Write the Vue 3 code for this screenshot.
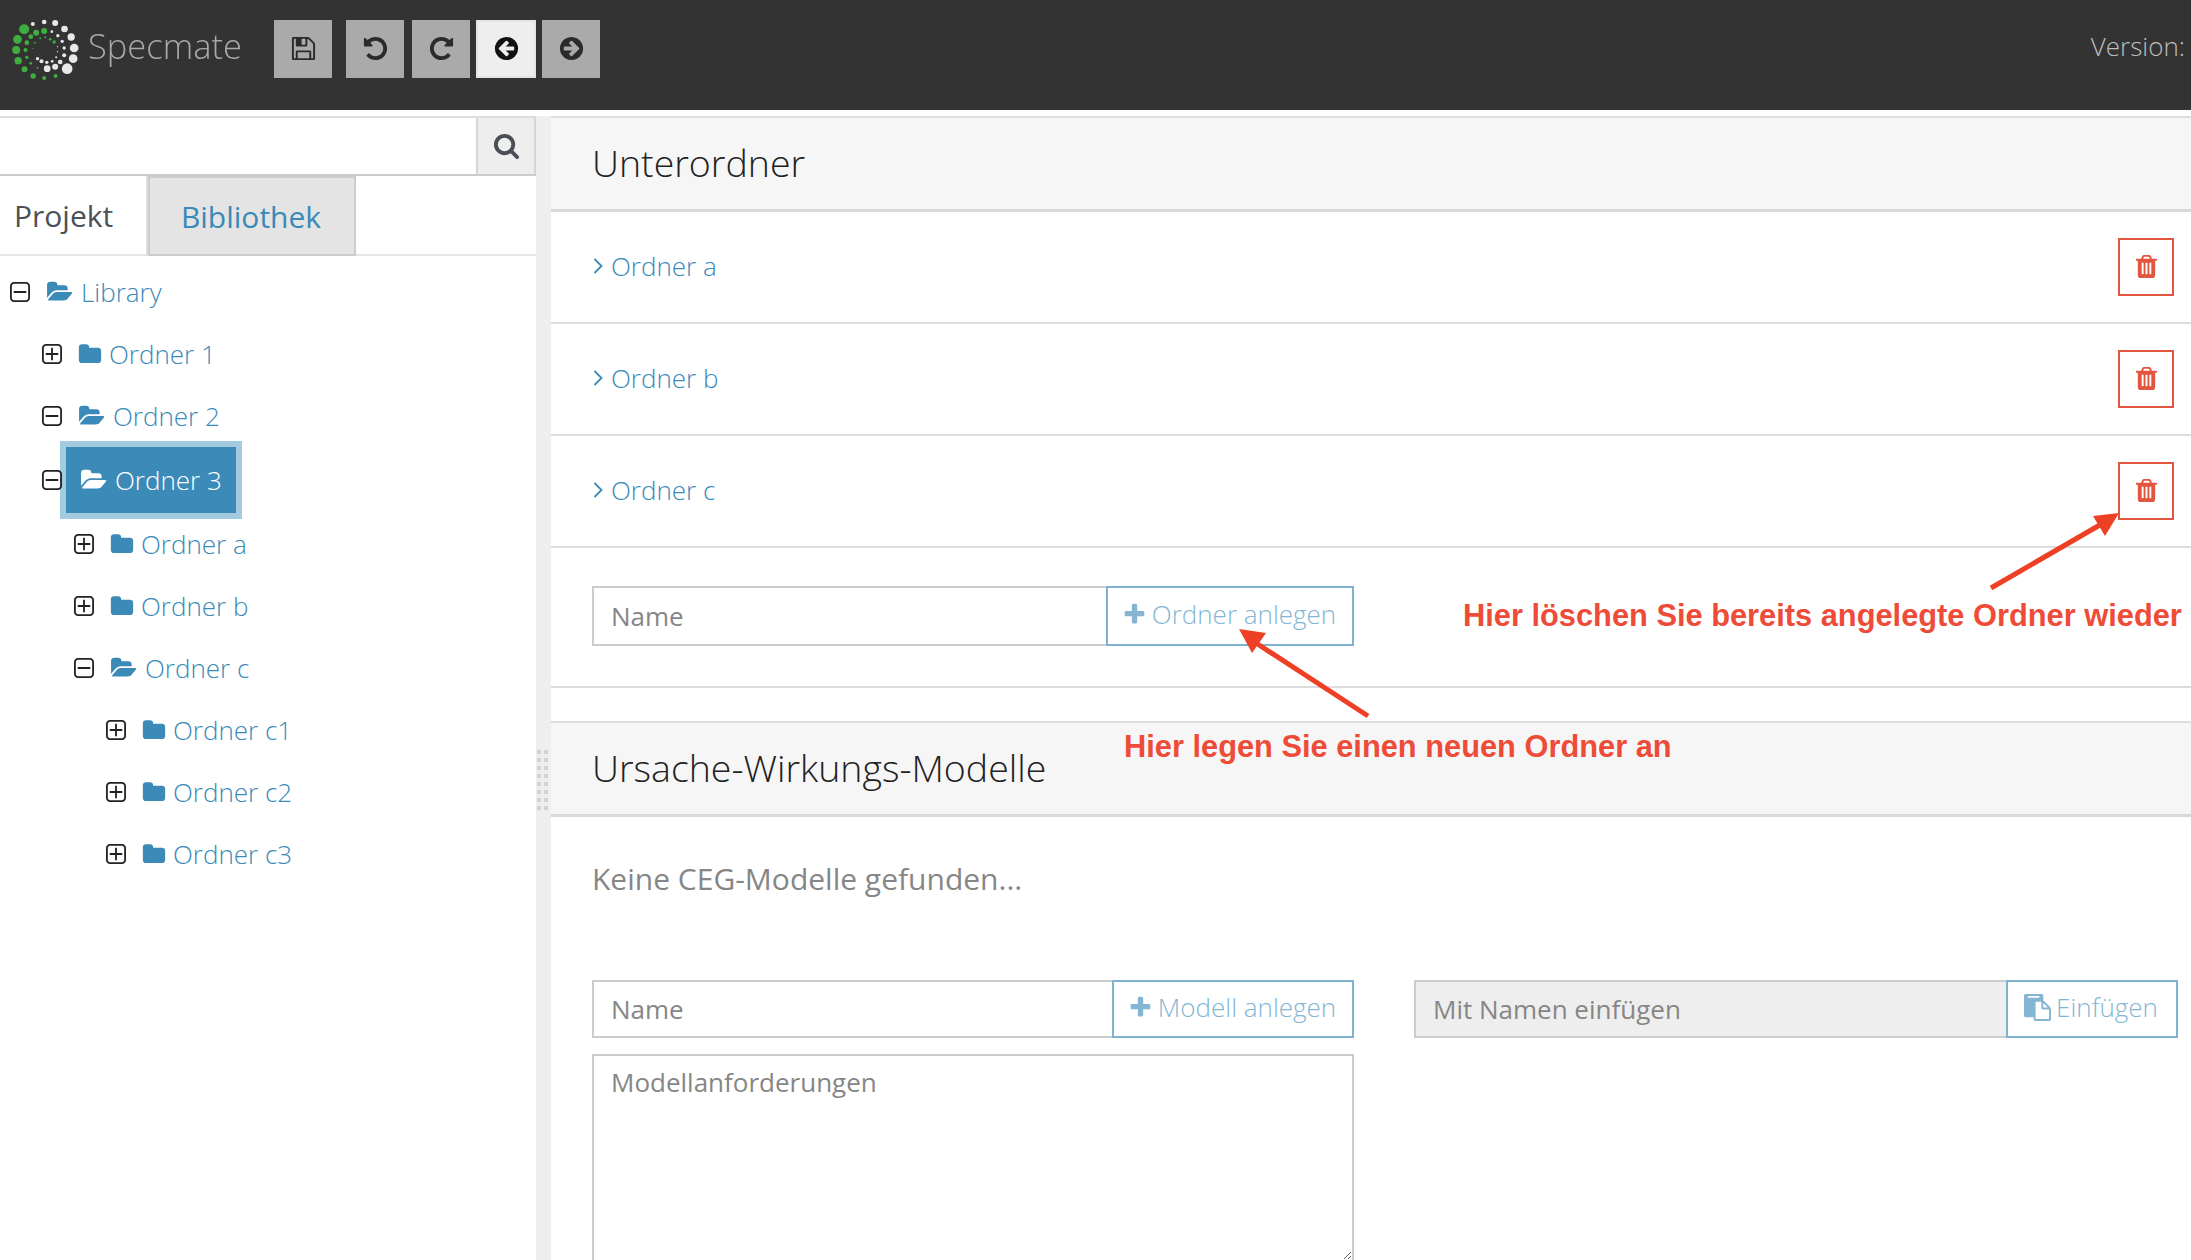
<script setup>
const d = {
  search: 'M1216 832q0-185-131.5-316.5t-316.5-131.5-316.5 131.5-131.5 316.5 131.5 316.5 316.5 131.5 316.5-131.5 131.5-316.5zm512 832q0 52-38 90t-90 38q-54 0-90-38l-343-342q-179 124-399 124-143 0-273.5-55.5t-225-150-150-225-55.5-273.5 55.5-273.5 150-225 225-150 273.5-55.5 273.5 55.5 225 150 150 225 55.5 273.5q0 220-124 399l343 343q37 37 37 90z',
  folder: 'M1728 608v704q0 92-66 158t-158 66h-1216q-92 0-158-66t-66-158v-960q0-92 66-158t158-66h320q92 0 158 66t66 158v32h672q92 0 158 66t66 158z',
  open: 'M1943 952q0 31-31 66l-336 396q-43 51-120.5 86.5t-143.5 35.5h-1088q-34 0-60.5-13t-26.5-43q0-31 31-66l336-396q43-51 120.5-86.5t143.5-35.5h1088q34 0 60.5 13t26.5 43zm-343-344v160h-832q-94 0-197 47.5t-164 119.5l-337 396-5 6q0-4-.5-12.5t-.5-12.5v-960q0-92 66-158t158-66h320q92 0 158 66t66 158v32h544q92 0 158 66t66 158z',
  trash: 'M704 1376v-704q0-14-9-23t-23-9h-64q-14 0-23 9t-9 23v704q0 14 9 23t23 9h64q14 0 23-9t9-23zm256 0v-704q0-14-9-23t-23-9h-64q-14 0-23 9t-9 23v704q0 14 9 23t23 9h64q14 0 23-9t9-23zm256 0v-704q0-14-9-23t-23-9h-64q-14 0-23 9t-9 23v704q0 14 9 23t23 9h64q14 0 23-9t9-23zm-544-992h448l-48-117q-7-9-17-11h-317q-10 2-17 11zm928 32v64q0 14-9 23t-23 9h-96v948q0 83-47 143.5t-113 60.5h-832q-66 0-113-58.5t-47-141.5v-952h-96q-14 0-23-9t-9-23v-64q0-14 9-23t23-9h309l70-167q15-37 54-63t79-26h320q40 0 79 26t54 63l70 167h309q14 0 23 9t9 23z',
  plus: 'M1600 736v192q0 40-28 68t-68 28h-416v416q0 40-28 68t-68 28h-192q-40 0-68-28t-28-68v-416h-416q-40 0-68-28t-28-68v-192q0-40 28-68t68-28h416v-416q0-40 28-68t68-28h192q40 0 68 28t28 68v416h416q40 0 68 28t28 68z',
  paste: 'M768 1664h896v-640h-416q-40 0-68-28t-28-68v-416h-384v1152zm256-1440v-64q0-13-9.5-22.5t-22.5-9.5h-704q-13 0-22.5 9.5t-9.5 22.5v64q0 13 9.5 22.5t22.5 9.5h704q13 0 22.5-9.5t9.5-22.5zm256 672h299l-299-299v299zm512 128v672q0 40-28 68t-68 28h-960q-40 0-68-28t-28-68v-160h-544q-40 0-68-28t-28-68v-1344q0-40 28-68t68-28h1088q40 0 68 28t28 68v328q21 13 36 28l408 408q28 28 48 76t20 88z',
  expand: 'M1344 800v64q0 14-9 23t-23 9h-352v352q0 14-9 23t-23 9h-64q-14 0-23-9t-9-23v-352h-352q-14 0-23-9t-9-23v-64q0-14 9-23t23-9h352v-352q0-14 9-23t23-9h64q14 0 23 9t9 23v352h352q14 0 23 9t9 23zm128 448v-832q0-66-47-113t-113-47h-832q-66 0-113 47t-47 113v832q0 66 47 113t113 47h832q66 0 113-47t47-113zm128-832v832q0 119-84.5 203.5t-203.5 84.5h-832q-119 0-203.5-84.5t-84.5-203.5v-832q0-119 84.5-203.5t203.5-84.5h832q119 0 203.5 84.5t84.5 203.5z',
  collapse: 'M1344 800v64q0 14-9 23t-23 9h-832q-14 0-23-9t-9-23v-64q0-14 9-23t23-9h832q14 0 23 9t9 23zm128 448v-832q0-66-47-113t-113-47h-832q-66 0-113 47t-47 113v832q0 66 47 113t113 47h832q66 0 113-47t47-113zm128-832v832q0 119-84.5 203.5t-203.5 84.5h-832q-119 0-203.5-84.5t-84.5-203.5v-832q0-119 84.5-203.5t203.5-84.5h832q119 0 203.5 84.5t84.5 203.5z',
}

const toolbar = [
  { key: 'save', path: 'M512 1536h768v-384h-768v384zm896 0h128v-896q0-14-10-38.5t-20-34.5l-281-281q-10-10-34-20t-39-10v416q0 40-28 68t-68 28h-576q-40 0-68-28t-28-68v-416h-128v1280h128v-416q0-40 28-68t68-28h832q40 0 68 28t28 68v416zm-384-928v-320q0-13-9.5-22.5t-22.5-9.5h-192q-13 0-22.5 9.5t-9.5 22.5v320q0 13 9.5 22.5t22.5 9.5h192q13 0 22.5-9.5t9.5-22.5zm640 32v928q0 40-28 68t-68 28h-1344q-40 0-68-28t-28-68v-1344q0-40 28-68t68-28h928q40 0 88 20t76 48l280 280q28 28 48 76t20 88z' },
  { key: 'undo', path: 'M1664 896q0 156-61 298t-164 245-245 164-298 61q-172 0-327-72.5t-264-204.5q-7-10-6.5-22.5t8.5-20.5l137-138q10-9 25-9 16 2 23 12 73 95 179 147t225 52q104 0 198.5-40.5t163.5-109.5 109.5-163.5 40.5-198.5-40.5-198.5-109.5-163.5-163.5-109.5-198.5-40.5q-98 0-188 35.5t-160 101.5l137 138q31 30 14 69-17 40-59 40h-448q-26 0-45-19t-19-45v-448q0-42 40-59 39-17 69 14l130 129q107-101 244.5-156.5t284.5-55.5q156 0 298 61t245 164 164 245 61 298z' },
  { key: 'redo', path: 'M1664 256v448q0 26-19 45t-45 19h-448q-42 0-59-40-17-39 14-69l138-138q-148-137-349-137-104 0-198.5 40.5t-163.5 109.5-109.5 163.5-40.5 198.5 40.5 198.5 109.5 163.5 163.5 109.5 198.5 40.5q119 0 225-52t179-147q7-10 23-12 14 0 25 9l137 138q9 8 9.5 20.5t-7.5 22.5q-109 132-264 204.5t-327 72.5q-156 0-298-61t-245-164-164-245-61-298 61-298 164-245 245-164 298-61q147 0 284.5 55.5t244.5 156.5l130-129q29-31 70-14 39 17 39 59z' },
  { key: 'back', active: true, path: 'M1408 960v-128q0-26-19-45t-45-19h-502l189-189q19-19 19-45t-19-45l-91-91q-18-18-45-18t-45 18l-362 362-91 91q-18 18-18 45t18 45l91 91 362 362q18 18 45 18t45-18l91-91q18-18 18-45t-18-45l-189-189h502q26 0 45-19t19-45zm256-64q0 209-103 385.5t-279.5 279.5-385.5 103-385.5-103-279.5-279.5-103-385.5 103-385.5 279.5-279.5 385.5-103 385.5 103 279.5 279.5 103 385.5z' },
  { key: 'forward', path: 'M1413 896q0-27-18-45l-91-91-362-362q-18-18-45-18t-45 18l-91 91q-18 18-18 45t18 45l189 189h-502q-26 0-45 19t-19 45v128q0 26 19 45t45 19h502l-189 189q-19 19-19 45t19 45l91 91q18 18 45 18t45-18l362-362 91-91q18-18 18-45zm251 0q0 209-103 385.5t-279.5 279.5-385.5 103-385.5-103-279.5-279.5-103-385.5 103-385.5 279.5-279.5 385.5-103 385.5 103 279.5 279.5 103 385.5z' },
]

const greenDots = [
  [72, 88, 15], [52, 118, 13], [48, 150, 12], [54, 182, 11], [73, 208, 9], [99, 228, 8], [132, 234, 6], [166, 228, 6],
  [108, 98, 9], [132, 93, 9], [92, 110, 7], [80, 128, 7], [76, 150, 6], [80, 172, 5], [92, 190, 4], [112, 203, 3],
  [104, 128, 3], [120, 115, 3], [135, 112, 3], [150, 118, 4], [162, 126, 5], [98, 145, 2],
]
const whiteDots = [
  [98, 72, 6], [132, 66, 7], [165, 69, 9], [193, 87, 10], [213, 111, 11], [222, 144, 13], [219, 176, 13], [201, 206, 16],
  [165, 200, 9], [141, 206, 10], [180, 186, 7], [192, 166, 6], [192, 144, 5], [186, 124, 5], [173, 107, 5], [155, 95, 4],
  [112, 176, 5], [124, 184, 6], [140, 187, 5], [156, 184, 4], [168, 172, 3], [172, 155, 2], [172, 140, 2],
]

const tree = [
  { name: 'Library', level: 0, open: true },
  { name: 'Ordner 1', level: 1 },
  { name: 'Ordner 2', level: 1, open: true },
  { name: 'Ordner 3', level: 1, open: true, selected: true },
  { name: 'Ordner a', level: 2 },
  { name: 'Ordner b', level: 2 },
  { name: 'Ordner c', level: 2, open: true },
  { name: 'Ordner c1', level: 3 },
  { name: 'Ordner c2', level: 3 },
  { name: 'Ordner c3', level: 3 },
]

const subfolders = ['Ordner a', 'Ordner b', 'Ordner c']
</script>

<template>
  <div class="page">
    <header class="topbar">
      <div class="brand">
        <svg class="logo" viewBox="0 0 260 300" width="87" height="100">
          <circle v-for="(c, i) in greenDots" :key="'g' + i" :cx="c[0]" :cy="c[1]" :r="c[2]" fill="#3fae3f" />
          <circle v-for="(c, i) in whiteDots" :key="'w' + i" :cx="c[0]" :cy="c[1]" :r="c[2]" fill="#e8e8e8" />
        </svg>
        <span class="brand-name">Specmate</span>
      </div>
      <div class="tools">
        <button v-for="t in toolbar" :key="t.key" class="tool" :class="[t.key, { active: t.active }]">
          <svg viewBox="0 0 1792 1792" width="27" height="27"><path :d="t.path" /></svg>
        </button>
      </div>
      <span class="version">Version:</span>
    </header>

    <div class="workspace">
      <aside class="sidebar">
        <div class="search">
          <div class="search-field"></div>
          <button class="search-btn">
            <svg viewBox="0 0 1792 1792" width="27" height="27"><path :d="d.search" /></svg>
          </button>
        </div>
        <div class="tabs">
          <div class="tab current">Projekt</div>
          <div class="tab other">Bibliothek</div>
        </div>
        <ul class="tree">
          <li
            v-for="n in tree"
            :key="n.name"
            class="tree-row"
            :class="{ selected: n.selected }"
            :style="{ paddingLeft: 10 + n.level * 32 + 'px' }"
          >
            <svg class="toggle" viewBox="192 128 1408 1408" width="20" height="20">
              <path :d="n.open ? d.collapse : d.expand" />
            </svg>
            <span class="node">
              <svg v-if="n.open" class="ico-open" viewBox="0 0 1984 1792" width="27" height="24"><path :d="d.open" /></svg>
              <svg v-else class="ico-closed" viewBox="0 128 1792 1536" width="24" height="21"><path :d="d.folder" /></svg>
              <span class="node-name">{{ n.name }}</span>
            </span>
          </li>
        </ul>
      </aside>

      <div class="gutter">
        <div class="grip">
          <i v-for="k in 16" :key="k"></i>
        </div>
      </div>

      <main class="content">
        <section class="panel first">
          <h2 class="panel-title">Unterordner</h2>
          <div v-for="s in subfolders" :key="s" class="folder-row">
            <a class="folder-link">
              <svg class="chevron" viewBox="0 0 10 16" width="10" height="16"><path d="M1.5 1 8.5 8l-7 7" /></svg>
              {{ s }}
            </a>
            <button class="del">
              <svg viewBox="0 0 1792 1792" width="27" height="27"><path :d="d.trash" /></svg>
            </button>
          </div>
          <div class="create-row">
            <div class="combo create-folder">
              <input class="field" placeholder="Name" />
              <button class="add">
                <svg viewBox="0 0 1792 1792" width="25" height="25"><path :d="d.plus" /></svg>
                Ordner anlegen
              </button>
            </div>
          </div>
        </section>

        <section class="panel second">
          <h2 class="panel-title">Ursache-Wirkungs-Modelle</h2>
          <div class="panel-body">
            <p class="empty">Keine CEG-Modelle gefunden...</p>
            <div class="model-grid">
              <div class="model-col">
                <div class="combo create-model">
                  <input class="field" placeholder="Name" />
                  <button class="add">
                    <svg viewBox="0 0 1792 1792" width="25" height="25"><path :d="d.plus" /></svg>
                    Modell anlegen
                  </button>
                </div>
                <textarea class="requirements" placeholder="Modellanforderungen"></textarea>
              </div>
              <div class="combo paste-model">
                <input class="field disabled" placeholder="Mit Namen einfügen" disabled />
                <button class="add">
                  <svg viewBox="0 0 1792 1792" width="27" height="27"><path :d="d.paste" /></svg>
                  Einfügen
                </button>
              </div>
            </div>
          </div>
        </section>
      </main>
    </div>

    <svg class="marks" width="2191" height="1260" viewBox="0 0 2191 1260">
      <line x1="1991" y1="588" x2="2105" y2="522" />
      <polygon points="2119,513 2093,516 2105,536" />
      <line x1="1368" y1="716" x2="1253" y2="641" />
      <polygon points="1239,629 1266,633 1252,653" />
    </svg>
    <span class="note note-delete">Hier löschen Sie bereits angelegte Ordner wieder</span>
    <span class="note note-create">Hier legen Sie einen neuen Ordner an</span>
  </div>
</template>

<style>
html, body {
  margin: 0;
  background: #fff;
}
</style>

<style scoped>
.page {
  position: relative;
  width: 2191px;
  height: 1260px;
  overflow: hidden;
  font-family: "Open Sans", sans-serif;
  font-weight: 300;
  background: #fff;
}

button {
  font-family: inherit;
  font-weight: inherit;
  cursor: pointer;
  padding: 0;
}

.topbar {
  height: 110px;
  background: #333;
  display: flex;
  align-items: flex-start;
  box-sizing: border-box;
}

.brand {
  width: 274px;
  display: flex;
  align-items: center;
  flex: none;
}

.logo {
  flex: none;
  filter: blur(0.4px);
}

.brand-name {
  color: #a8a8a8;
  font-size: 34.5px;
  margin-left: 1px;
  filter: blur(0.5px);
  position: relative;
  top: -5px;
}

.tools {
  display: flex;
  margin-top: 20px;
}

.tool {
  width: 58px;
  height: 58px;
  background: #aaa;
  border: 0;
  margin-right: 8px;
  display: flex;
  align-items: center;
  justify-content: center;
}

.tool svg {
  fill: #2b2b2b;
  margin-bottom: 1px;
}

.tool.save {
  margin-right: 14px;
}

.tool.redo,
.tool.back {
  margin-right: 6px;
}

.tool.active {
  width: 60px;
  background: #eee;
  border: 2px solid #e4e4e4;
  box-sizing: border-box;
}

.tool.active svg {
  fill: #111;
}

.version {
  margin-left: auto;
  margin-top: 28px;
  margin-right: 6px;
  color: #bdbdbd;
  font-size: 26px;
}

.workspace {
  display: flex;
  margin-top: 6px;
  height: 1144px;
}

.sidebar {
  width: 536px;
  flex: none;
}

.search {
  height: 60px;
  box-sizing: border-box;
  display: flex;
  border-top: 2px solid #ddd;
  border-bottom: 2px solid #ccc;
}

.search-field {
  flex: 1;
}

.search-btn {
  width: 60px;
  box-sizing: border-box;
  background: #eee;
  border: 0;
  border-left: 2px solid #d5d5d5;
  border-right: 2px solid #d5d5d5;
  display: flex;
  align-items: center;
  justify-content: center;
}

.search-btn svg {
  fill: #4a4f55;
  margin-bottom: 2px;
}

.tabs {
  display: flex;
  height: 80px;
  box-sizing: border-box;
  border-bottom: 2px solid #e6e6e6;
}

.tab {
  font-size: 30px;
  font-weight: 400;
  display: flex;
  align-items: center;
  box-sizing: border-box;
}

.tab.current {
  width: 148px;
  padding-left: 14px;
  color: #4b5157;
  border-right: 2px solid #ddd;
}

.tab.other {
  width: 208px;
  justify-content: center;
  padding-right: 2px;
  background: #e4e4e4;
  color: #3a8ab8;
  border: 2px solid #ccc;
  margin-bottom: -2px;
}

.tree {
  list-style: none;
  margin: 0;
  padding: 5px 0 0;
}

.tree-row {
  height: 62px;
  display: flex;
  align-items: center;
  box-sizing: border-box;
  color: #3b8ab8;
  font-size: 26px;
}

.tree-row.selected {
  height: 66px;
  align-items: stretch;
}

.toggle {
  flex: none;
  fill: #222;
  position: relative;
  z-index: 1;
}

.selected .toggle {
  align-self: center;
}

.node {
  display: flex;
  align-items: center;
  margin-left: 16px;
}

.node svg {
  fill: #3b8ab8;
  flex: none;
}

.ico-open {
  margin-right: 8px;
}

.ico-closed {
  margin-right: 7px;
}

.selected .node {
  margin-left: 4px;
  padding: 0 14px;
  background: #3b8ab8;
  color: #fff;
  box-shadow: 0 0 0 6px #a3cbdf;
}

.selected .node svg {
  fill: #fff;
}

.gutter {
  width: 15px;
  flex: none;
  background: #eee;
  position: relative;
}

.grip {
  position: absolute;
  left: 1px;
  top: 634px;
  display: grid;
  grid-template-columns: repeat(2, 4px);
  grid-auto-rows: 4px;
  column-gap: 3px;
  row-gap: 4px;
}

.grip i {
  background: #d2d2d2;
}

.content {
  flex: 1;
  min-width: 0;
}

.panel {
  border-top: 2px solid #ddd;
  border-bottom: 2px solid #ddd;
}

.panel.second {
  margin-top: 33px;
  border-bottom: 0;
}

.panel-title {
  margin: 0;
  height: 94px;
  box-sizing: border-box;
  background: #f6f6f6;
  border-bottom: 3px solid #d9d9d9;
  padding: 0 0 3px 41px;
  display: flex;
  align-items: center;
  color: #222;
  font-size: 37.5px;
  font-weight: 300;
}

.folder-row {
  height: 112px;
  box-sizing: border-box;
  border-bottom: 2px solid #ddd;
  display: flex;
  align-items: center;
  justify-content: space-between;
  padding: 0 17px 2px 42px;
}

.folder-link {
  display: flex;
  align-items: center;
  gap: 8px;
  color: #3b8ab8;
  font-size: 26px;
}

.chevron {
  fill: none;
  stroke: #3b8ab8;
  stroke-width: 1.8;
}

.del {
  width: 56px;
  height: 58px;
  margin-top: 2px;
  background: #fff;
  border: 2px solid #e2563f;
  display: flex;
  align-items: center;
  justify-content: center;
}

.del svg {
  fill: #e2563f;
  margin-bottom: 2px;
}

.create-row {
  height: 138px;
  padding: 38px 0 0 41px;
  box-sizing: border-box;
}

.combo {
  display: flex;
  height: 60px;
  box-sizing: border-box;
}

.create-folder {
  width: 762px;
}

.create-model {
  height: 58px;
}

.paste-model {
  width: 764px;
  height: 58px;
}

.field {
  flex: 1;
  min-width: 0;
  box-sizing: border-box;
  height: 100%;
  border: 2px solid #ccc;
  border-right: 0;
  border-radius: 0;
  background: #fff;
  padding: 0 0 0 17px;
  font-family: inherit;
  font-size: 26px;
  font-weight: 400;
  outline: none;
}

.field::placeholder,
.requirements::placeholder {
  color: #868686;
  opacity: 1;
}

.field.disabled {
  background: #eee;
}

.add {
  flex: none;
  box-sizing: border-box;
  height: 100%;
  background: #fff;
  border: 2px solid #7fb2d0;
  padding: 0 2px 4px 0;
  color: #84b6d3;
  font-size: 26px;
  display: flex;
  align-items: center;
  justify-content: center;
  gap: 5px;
}

.add svg {
  fill: #84b6d3;
}

.create-folder .add {
  width: 248px;
}

.create-model .add {
  width: 242px;
}

.paste-model .add {
  width: 172px;
}

.panel-body {
  padding: 0 13px 0 41px;
}

.empty {
  margin: 0;
  padding: 41px 0 0 0;
  height: 163px;
  box-sizing: border-box;
  color: #868686;
  font-size: 30px;
  font-weight: 400;
}

.model-grid {
  display: flex;
  gap: 60px;
  align-items: flex-start;
}

.model-col {
  width: 762px;
  flex: none;
}

.requirements {
  display: block;
  width: 100%;
  height: 208px;
  box-sizing: border-box;
  margin-top: 16px;
  border: 2px solid #ccc;
  border-radius: 0;
  padding: 8px 17px;
  font-family: inherit;
  font-size: 26px;
  font-weight: 400;
  outline: none;
}

.marks {
  position: absolute;
  left: 0;
  top: 0;
  pointer-events: none;
}

.marks line {
  stroke: #ee4024;
  stroke-width: 5;
}

.marks polygon {
  fill: #ee4024;
}

.note {
  position: absolute;
  font-family: "Liberation Sans", Arial, sans-serif;
  font-weight: 700;
  color: #ee4b38;
  font-size: 30.8px;
  line-height: 36px;
  white-space: nowrap;
}

.note-delete {
  left: 1463px;
  top: 598px;
}

.note-create {
  left: 1124px;
  top: 729px;
}
</style>
